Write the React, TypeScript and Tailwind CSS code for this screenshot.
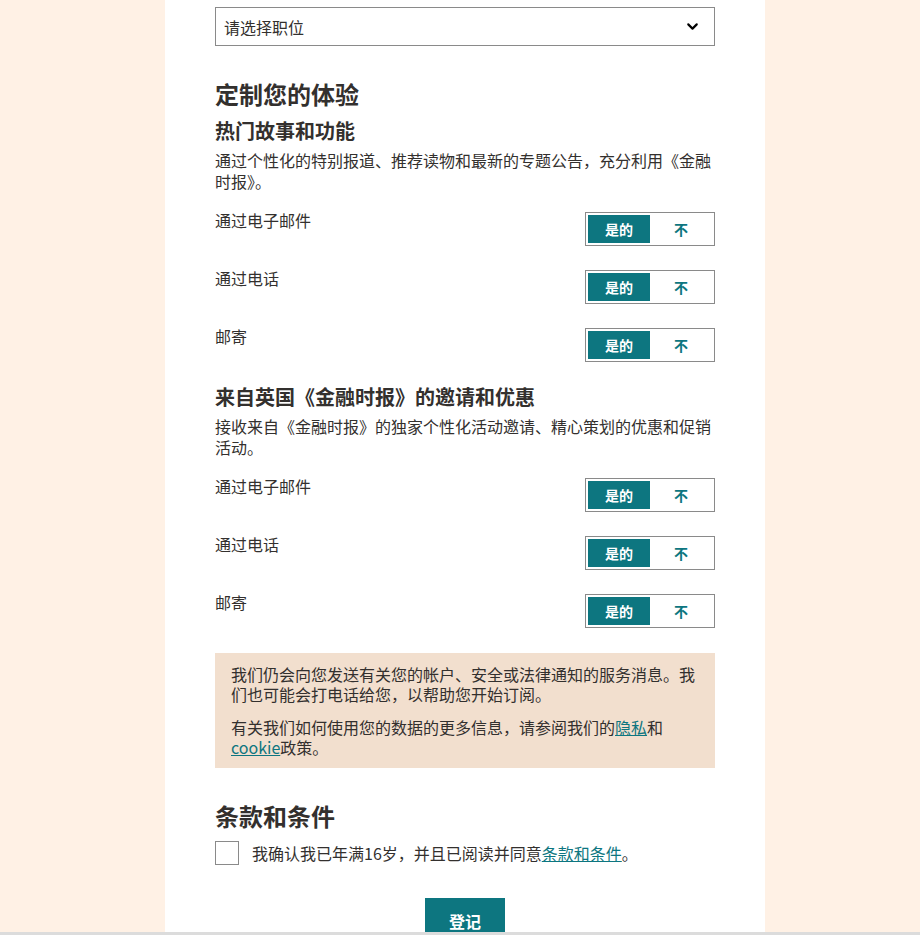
import { ChevronDown } from "lucide-react"

const rows = ["通过电子邮件", "通过电话", "邮寄"]

function Toggle() {
  return (
    <div className="flex h-[34px] w-[130px] shrink-0 border border-[#8a8a8a] p-[2px]">
      <div className="flex flex-1 items-center justify-center bg-[#0d7680] text-[14px] font-bold text-white">
        是的
      </div>
      <div className="flex flex-1 items-center justify-center text-[14px] font-bold text-[#0d7680]">
        不
      </div>
    </div>
  )
}

function Section({ title, desc }: { title: string; desc: string }) {
  return (
    <div>
      <h3 className="text-[20px] leading-[24px] font-bold">{title}</h3>
      <p className="mt-[7px] text-[16px] leading-[21px]">{desc}</p>
      <div className="mt-[20px] flex flex-col gap-[24px]">
        {rows.map((r) => (
          <div key={r} className="flex items-start justify-between">
            <span className="text-[16px] leading-[16px]">{r}</span>
            <Toggle />
          </div>
        ))}
      </div>
    </div>
  )
}

export default function App() {
  return (
    <div className="flex h-[935px] flex-col font-['Noto_Sans_CJK_SC',sans-serif] text-[#33302e]">
      <div className="flex flex-1 overflow-hidden bg-[#fff1e5] pl-[165px]">
        <div className="w-[600px] bg-white px-[50px] pt-[7px]">
          <div className="flex h-[39px] items-center justify-between border border-[#8a8a8a] pr-[13px] pl-[8px]">
            <span className="text-[16px]">请选择职位</span>
            <ChevronDown className="h-[17px] w-[17px] text-black" strokeWidth={3} />
          </div>

          <h2 className="mt-[34px] text-[24px] leading-[28px] font-bold">定制您的体验</h2>
          <div className="mt-[11px]">
            <Section
              title="热门故事和功能"
              desc="通过个性化的特别报道、推荐读物和最新的专题公告，充分利用《金融时报》。"
            />
          </div>
          <div className="mt-[23px]">
            <Section
              title="来自英国《金融时报》的邀请和优惠"
              desc="接收来自《金融时报》的独家个性化活动邀请、精心策划的优惠和促销活动。"
            />
          </div>

          <div className="mt-[25px] bg-[#f2dfce] px-4 py-[11px] text-[16px] leading-[20px]">
            <p>我们仍会向您发送有关您的帐户、安全或法律通知的服务消息。我们也可能会打电话给您，以帮助您开始订阅。</p>
            <p className="mt-[13px]">
              有关我们如何使用您的数据的更多信息，请参阅我们的
              <a className="text-[#0d7680] underline">隐私</a>和
              <a className="text-[#0d7680] underline">cookie</a>政策。
            </p>
          </div>

          <h2 className="mt-[34px] text-[24px] leading-[28px] font-bold">条款和条件</h2>
          <div className="mt-[11px] flex items-center gap-[13px]">
            <div className="h-[24px] w-[24px] shrink-0 border border-[#8a8a8a]" />
            <span className="text-[16px] leading-[24px]">
              我确认我已年满16岁，并且已阅读并同意
              <a className="text-[#0d7680] underline">条款和条件</a>。
            </span>
          </div>

          <div className="mt-[33px] flex justify-center">
            <button className="h-[44px] w-[80px] bg-[#0d7680] pt-[2px] text-[16px] font-bold text-white">
              登记
            </button>
          </div>
        </div>
      </div>
      <div className="h-[3px] bg-[#dcdcdc]" />
    </div>
  )
}
